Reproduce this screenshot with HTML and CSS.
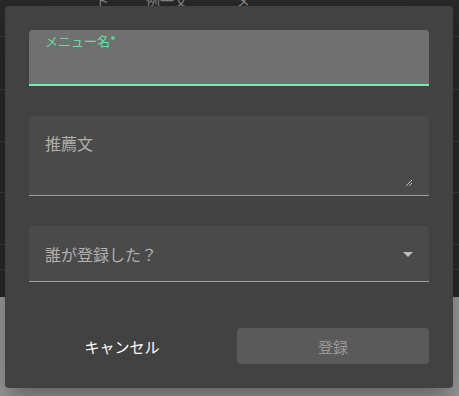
FILE: index.html
```html
<!DOCTYPE html>
<html lang="ja">
<head>
    <meta charset="UTF-8">
    <meta name="viewport" content="width=device-width, initial-scale=1.0">
    <title>メニュー登録</title>
    <link rel="stylesheet" href="styles.css">
</head>
<body>
    <div class="backdrop">
        <div class="page-table">
            <div class="page-head">
                <span class="col-a">ト</span>
                <span class="col-b">例一文</span>
                <span class="col-c">メ</span>
            </div>
            <div class="page-row r1"></div>
            <div class="page-row r2"></div>
            <div class="page-row r3"></div>
            <div class="page-row r4"></div>
            <div class="page-row r5"></div>
        </div>
        <div class="page-footer"></div>
    </div>

    <div class="dialog">
        <div class="field field-filled field-focused">
            <label class="field-label small">メニュー名*</label>
        </div>

        <div class="field field-textarea">
            <label class="field-label">推薦文</label>
            <svg class="resize" width="8" height="8" viewBox="0 0 8 8">
                <path d="M1 7 L7 1 M4 7 L7 4" stroke="#bdbdbd" stroke-width="1"/>
            </svg>
        </div>

        <div class="field field-select">
            <label class="field-label">誰が登録した？</label>
            <svg class="arrow" width="10" height="5" viewBox="0 0 10 5">
                <path d="M0 0 L10 0 L5 5 Z" fill="#bdbdbd"/>
            </svg>
        </div>

        <div class="actions">
            <button class="btn btn-text">キャンセル</button>
            <button class="btn btn-disabled">登録</button>
        </div>
    </div>
</body>
</html>
```

FILE: styles.css
```css
body {
    margin: 0;
    width: 459px;
    height: 396px;
    overflow: hidden;
    font-family: "Noto Sans CJK JP", "Noto Sans", sans-serif;
    background: #9e9e9e;
    position: relative;
}
.backdrop {
    height: 396px;
    display: flex;
    flex-direction: column;
}
.page-table {
    height: 297px;
    background: #2a2a2a;
}
.page-head {
    height: 36px;
    border-bottom: 1px solid #3c3c3c;
    position: relative;
    color: #8a8a8a;
    font-size: 14px;
}
.page-head span {
    position: absolute;
    top: -10px;
}
.col-a { left: 95px; }
.col-b { left: 146px; }
.col-c { left: 236px; }
.page-row {
    border-bottom: 1px solid #3c3c3c;
}
.r1 { height: 52px; }
.r2 { height: 51px; }
.r3 { height: 50px; }
.r4 { height: 51px; }
.r5 { height: 24px; }
.page-footer {
    flex: 1;
    background: #9e9e9e;
}

.dialog {
    position: absolute;
    left: 5px;
    top: 6px;
    width: 448px;
    height: 382px;
    box-sizing: border-box;
    padding: 24px;
    background: #424242;
    border-radius: 4px;
    box-shadow: 0 11px 15px -7px rgba(0,0,0,0.2), 0 24px 38px 3px rgba(0,0,0,0.14), 0 9px 46px 8px rgba(0,0,0,0.12);
    display: flex;
    flex-direction: column;
}
.field {
    position: relative;
    background: #4a4a4a;
    border-radius: 4px 4px 0 0;
    border-bottom: 1px solid #9e9e9e;
    box-sizing: border-box;
    padding: 0 16px;
}
.field-filled {
    height: 56px;
    background: #707070;
}
.field-focused {
    border-bottom: 2px solid #69f0ae;
}
.field-textarea {
    height: 80px;
    margin-top: 30px;
}
.field-select {
    height: 56px;
    margin-top: 30px;
    display: flex;
    align-items: center;
    justify-content: space-between;
}
.field-label {
    display: block;
    color: #b0b0b0;
    font-size: 16px;
    line-height: 20px;
}
.field-textarea .field-label {
    padding-top: 17px;
}
.field-label.small {
    color: #69f0ae;
    font-size: 13px;
    line-height: 14px;
    padding-top: 4px;
    opacity: 0.85;
}
.field-select .field-label {
    margin-top: 1px;
}
.resize {
    position: absolute;
    right: 16px;
    bottom: 8px;
}
.arrow {
    margin-right: 0;
    margin-top: 2px;
}
.actions {
    margin-top: 46px;
    display: grid;
    grid-template-columns: 186px 192px;
    gap: 22px;
}
.btn {
    height: 36px;
    border: none;
    border-radius: 4px;
    font-family: inherit;
    font-size: 15px;
    font-weight: 400;
}
.btn-text {
    background: transparent;
    color: #ffffff;
}
.btn-disabled {
    background: #5a5a5a;
    color: #9a9a9a;
}
```
